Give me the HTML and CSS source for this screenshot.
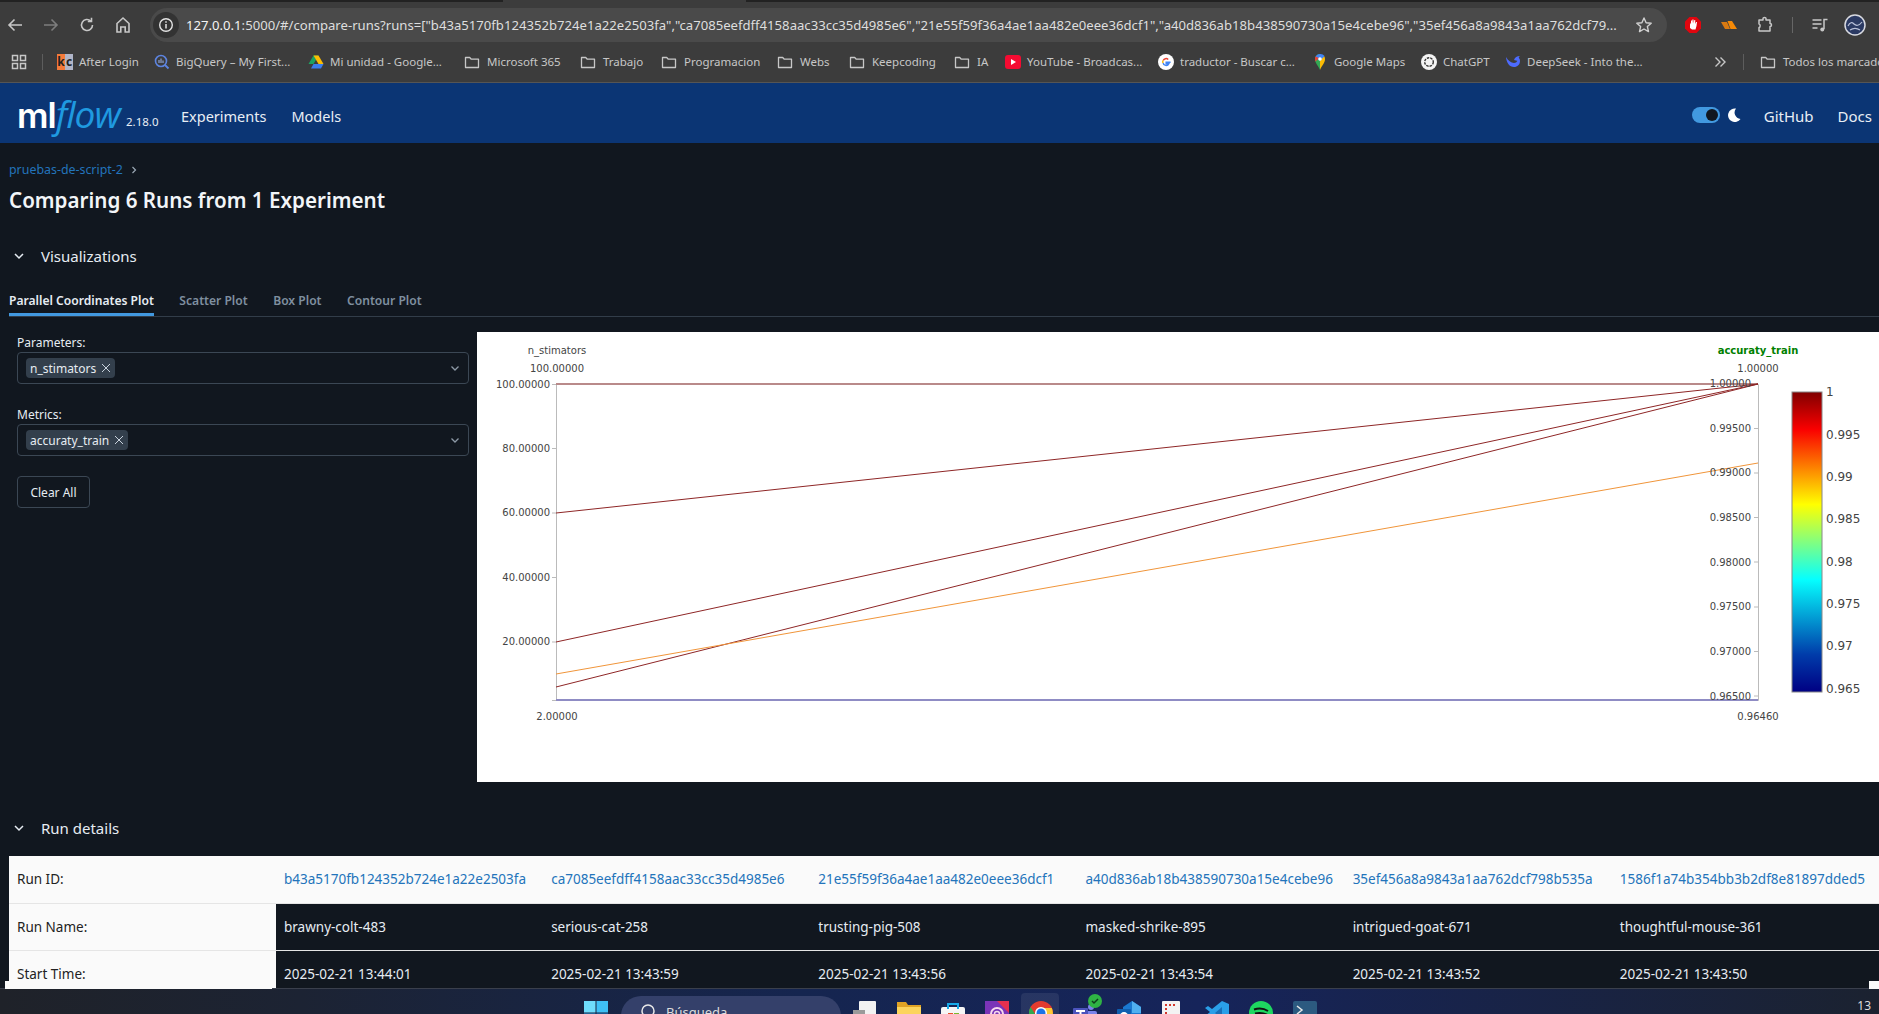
FILE: index.html
```html
<!DOCTYPE html>
<html lang="en">
<head>
    <meta charset="UTF-8">
    <title>MLflow - Comparing 6 Runs</title>
    <link rel="stylesheet" href="styles.css">
</head>
<body>
    <svg class="defs" width="0" height="0">
        <symbol id="folder" viewBox="0 0 16 16">
            <path d="M1.5 3.5h4.2l1.6 1.7h7.2v8.3h-13z" fill="none" stroke="#c7c7c7" stroke-width="1.3" stroke-linejoin="round"/>
        </symbol>
    </svg>

    <div class="tabstrip"><span class="tabstrip-active"></span></div>

    <div class="toolbar">
        <div class="nav-icons">
            <svg width="20" height="20" viewBox="0 0 20 20"><path d="M17 10H4M9.5 4.5 4 10l5.5 5.5" fill="none" stroke="#c7c7c7" stroke-width="1.6"/></svg>
            <svg width="20" height="20" viewBox="0 0 20 20"><path d="M3 10h13M10.5 4.5 16 10l-5.5 5.5" fill="none" stroke="#7d7d7d" stroke-width="1.6"/></svg>
            <svg width="20" height="20" viewBox="0 0 20 20"><path d="M15.5 10a5.5 5.5 0 1 1-1.7-4M14.5 2.8v3.7h-3.7" fill="none" stroke="#c7c7c7" stroke-width="1.6"/></svg>
            <svg width="20" height="20" viewBox="0 0 20 20"><path d="M4 17V8.5L10 3l6 5.5V17h-3.8v-5H7.8v5z" fill="none" stroke="#c7c7c7" stroke-width="1.6"/></svg>
        </div>
        <div class="url-bar">
            <span class="url-info">
                <svg width="16" height="16" viewBox="0 0 16 16"><circle cx="8" cy="8" r="6.3" fill="none" stroke="#e3e3e3" stroke-width="1.4"/><path d="M8 7v4.5M8 4.3v1.5" stroke="#e3e3e3" stroke-width="1.5"/></svg>
            </span>
            <span class="url-text"><span class="url-host">127.0.0.1</span>:5000/#/compare-runs?runs=["b43a5170fb124352b724e1a22e2503fa","ca7085eefdff4158aac33cc35d4985e6","21e55f59f36a4ae1aa482e0eee36dcf1","a40d836ab18b438590730a15e4cebe96","35ef456a8a9843a1aa762dcf79...</span>
            <svg class="url-star" width="18" height="18" viewBox="0 0 18 18"><path d="m9 2 2.1 4.7 5.1.5-3.8 3.4 1.1 5L9 13l-4.500 2.600 1.100-5L1.800 7.200l5.100-.5z" fill="none" stroke="#d0d0d0" stroke-width="1.4" stroke-linejoin="round"/></svg>
        </div>
        <div class="ext-icons">
            <svg width="18" height="18" viewBox="0 0 18 18"><path d="M5.5 1h7L17 5.5v7L12.5 17h-7L1 12.5v-7z" fill="#e0060f"/><path d="M6 12V6.5l1 2V4.500h1v3l.4-4h1.100l.2 4 .6-3.500h1l-.2 4 .9-2h1L12.500 10l-1 3.500H8z" fill="#fff"/></svg>
            <svg width="18" height="14" viewBox="0 0 18 14"><path d="M1 4h6l3 7H5z" fill="#d97a12"/><path d="M7.5 3H12l5 8h-6.5z" fill="#f58a07"/></svg>
            <svg width="18" height="18" viewBox="0 0 18 18"><path d="M3 4h4V2.500c0-1.500 3-1.500 3 0V4h4v3.500c2 0 2 3 0 3V15H3v-3.500c1.500 0 1.500-3.500 0-3.500z" fill="none" stroke="#c7c7c7" stroke-width="1.5" stroke-linejoin="round"/></svg>
            <span class="ext-sep"></span>
            <svg class="ext-music" width="18" height="18" viewBox="0 0 18 18"><path d="M1.5 4h9M1.5 8h9M1.5 12h5" stroke="#c7c7c7" stroke-width="1.5"/><path d="M13 13V3.5h3.5" fill="none" stroke="#c7c7c7" stroke-width="1.5"/><circle cx="11.3" cy="13.5" r="2" fill="#c7c7c7"/></svg>
            <svg class="ext-avatar" width="22" height="22" viewBox="0 0 22 22"><circle cx="11" cy="11" r="10" fill="#2b3a63" stroke="#d7d9e0" stroke-width="1.5"/><path d="M4 12c2-4 4-4 6-2s5 2 8-2M6 16c3-2 7-2 10 0" fill="none" stroke="#b8c0d8" stroke-width="1.2"/></svg>
        </div>
    </div>

    <div class="bookmarks">
        <svg class="bm-apps" width="16" height="16" viewBox="0 0 16 16"><path d="M1.5 1.5h5v5h-5zM9.5 1.5h5v5h-5zM1.5 9.5h5v5h-5zM9.5 9.5h5v5h-5z" fill="none" stroke="#c7c7c7" stroke-width="1.5"/></svg>
        <span class="bm-sep"></span>
        <div class="bm-grid">
            <span class="bm"><span class="kc-icon"><b>k</b><b>c</b></span>After Login</span>
            <span class="bm"><svg width="16" height="16" viewBox="0 0 16 16"><circle cx="7" cy="7" r="5.5" fill="none" stroke="#5d84e0" stroke-width="1.6"/><path d="m11 11 3.5 3.5" stroke="#5d84e0" stroke-width="1.8"/><path d="M5 6v3M7 4.5V9M9 6.5V9" stroke="#9db5ee" stroke-width="1"/></svg>BigQuery – My First...</span>
            <span class="bm"><svg width="16" height="16" viewBox="0 0 16 16"><path d="M5.5 1.5h5L5.5 10H.5z" fill="#1ca261"/><path d="M5.5 1.5h5l5 8.5h-5z" fill="#fbbc04"/><path d="M3 14.5 5.5 10h10L13 14.5z" fill="#3b7ded"/></svg>Mi unidad - Google...</span>
            <span class="bm bm-folder"><svg width="16" height="16"><use href="#folder"/></svg>Microsoft 365</span>
            <span class="bm bm-folder"><svg width="16" height="16"><use href="#folder"/></svg>Trabajo</span>
            <span class="bm bm-folder"><svg width="16" height="16"><use href="#folder"/></svg>Programacion</span>
            <span class="bm bm-folder"><svg width="16" height="16"><use href="#folder"/></svg>Webs</span>
            <span class="bm bm-folder"><svg width="16" height="16"><use href="#folder"/></svg>Keepcoding</span>
            <span class="bm bm-folder"><svg width="16" height="16"><use href="#folder"/></svg>IA</span>
            <span class="bm"><svg width="16" height="16" viewBox="0 0 16 16"><rect y="1" width="16" height="14" rx="3" fill="#f50b32"/><path d="m6 5 5 3-5 3z" fill="#fff"/></svg>YouTube - Broadcas...</span>
            <span class="bm"><svg width="16" height="16" viewBox="0 0 16 16"><circle cx="8" cy="8" r="8" fill="#fff"/><path d="M12.6 8.2H8.2v1.5h2.600a3 3 0 0 1-5.700-1" fill="none" stroke="#4285f4" stroke-width="1.5"/><path d="M5.2 6.5A3.100 3.100 0 0 1 10.200 5.500" fill="none" stroke="#ea4335" stroke-width="1.5"/><path d="M5 6.5a3 3 0 0 0 0 2.500" fill="none" stroke="#fbbc05" stroke-width="1.5"/></svg>traductor - Buscar c...</span>
            <span class="bm"><svg width="16" height="18" viewBox="0 0 16 18"><path d="M8 17C6 12 3 10 3 6a5 5 0 0 1 5-5z" fill="#34a853"/><path d="M8 17c2-5 5-7 5-11 0-1-.3-2-.8-2.700L8 6z" fill="#fbbc04"/><path d="M3.5 4 8 8l4.500-5A5 5 0 0 0 8 1a5 5 0 0 0-4.500 3" fill="#4285f4"/><path d="M3.5 3.5A5 5 0 0 0 3 6c0 1 .2 1.700.5 2.500L7 5z" fill="#ea4335"/><circle cx="8" cy="6" r="1.8" fill="#fff"/></svg>Google Maps</span>
            <span class="bm"><svg width="16" height="16" viewBox="0 0 16 16"><circle cx="8" cy="8" r="8" fill="#f4f4f4"/><circle cx="8" cy="8" r="4.3" fill="none" stroke="#333" stroke-width="1.4" stroke-dasharray="2.5 1"/></svg>ChatGPT</span>
            <span class="bm"><svg width="16" height="16" viewBox="0 0 16 16"><path d="M1 3c.5 6 3.500 10 8 10 3.500 0 6-2.500 6-6 0-2-1-3.500-2.500-4 .8 2.500-.2 6-3.500 6C6 9 3 6.500 1 3z" fill="#4d6bfe"/><path d="M9 6c.8-2.500 3-4 6-4-1.200 1-2 2.500-2 5z" fill="#4d6bfe"/></svg>DeepSeek - Into the...</span>
        </div>
        <svg class="bm-more" width="14" height="14" viewBox="0 0 14 14"><path d="m2.5 2.5 4.5 4.5-4.5 4.5M7.5 2.5 12 7l-4.5 4.5" fill="none" stroke="#c7c7c7" stroke-width="1.4"/></svg>
        <span class="bm-sep bm-sep-end"></span>
        <span class="bm bm-folder"><svg width="16" height="16"><use href="#folder"/></svg>Todos los marcados</span>
    </div>

    <header class="app-header">
        <div class="logo"><span class="logo-ml">ml</span><span class="logo-flow">flow</span></div>
        <span class="version">2.18.0</span>
        <nav class="app-nav">
            <a>Experiments</a>
            <a>Models</a>
        </nav>
        <div class="app-right">
            <span class="theme-toggle"><span class="theme-knob"></span></span>
            <svg class="moon" width="14" height="14" viewBox="0 0 14 14"><path d="M9 .5A6.800 6.800 0 1 0 13.500 11 6.500 6.500 0 0 1 9 .5z" fill="#fff"/></svg>
            <a>GitHub</a>
            <a>Docs</a>
        </div>
    </header>

    <main class="main">
        <div class="breadcrumb"><a>pruebas-de-script-2</a><svg width="10" height="10" viewBox="0 0 10 10"><path d="m3.5 2 3 3-3 3" fill="none" stroke="#9aa7b4" stroke-width="1.2"/></svg></div>
        <h1 class="page-title">Comparing 6 Runs from 1 Experiment</h1>

        <div class="section-head section-head-vis">
            <svg width="12" height="12" viewBox="0 0 12 12"><path d="m2 4 4 4 4-4" fill="none" stroke="#e6ecf2" stroke-width="1.5"/></svg>
            <span>Visualizations</span>
        </div>

        <div class="tabs">
            <span class="tab tab-active">Parallel Coordinates Plot</span>
            <span class="tab">Scatter Plot</span>
            <span class="tab">Box Plot</span>
            <span class="tab">Contour Plot</span>
        </div>

        <div class="plot-row">
            <div class="controls">
                <label class="field-label">Parameters:</label>
                <div class="select">
                    <span class="tag">n_stimators<svg width="10" height="10" viewBox="0 0 10 10"><path d="m1 1 8 8M9 1 1 9" stroke="#c9d2dc" stroke-width="1"/></svg></span>
                    <svg class="select-arrow" width="10" height="10" viewBox="0 0 10 10"><path d="m1.5 3.5 3.5 3.5 3.5-3.5" fill="none" stroke="#8d99a6" stroke-width="1.3"/></svg>
                </div>
                <label class="field-label field-label-next">Metrics:</label>
                <div class="select">
                    <span class="tag">accuraty_train<svg width="10" height="10" viewBox="0 0 10 10"><path d="m1 1 8 8M9 1 1 9" stroke="#c9d2dc" stroke-width="1"/></svg></span>
                    <svg class="select-arrow" width="10" height="10" viewBox="0 0 10 10"><path d="m1.5 3.5 3.5 3.5 3.5-3.5" fill="none" stroke="#8d99a6" stroke-width="1.3"/></svg>
                </div>
                <button class="clear-btn">Clear All</button>
            </div>

            <div class="plot">
                <svg width="1402" height="450" viewBox="477 332 1402 450">
                    <defs>
                        <linearGradient id="jet" x1="0" y1="1" x2="0" y2="0">
                            <stop offset="0" stop-color="rgb(0,0,131)"/>
                            <stop offset="0.125" stop-color="rgb(0,60,170)"/>
                            <stop offset="0.375" stop-color="rgb(5,255,255)"/>
                            <stop offset="0.625" stop-color="rgb(255,255,0)"/>
                            <stop offset="0.875" stop-color="rgb(250,0,0)"/>
                            <stop offset="1" stop-color="rgb(128,0,0)"/>
                        </linearGradient>
                    </defs>

                    <!-- axes -->
                    <path class="axis" d="M552 384.5H556.5V700.5H552M552 448.5H556M552 513H556M552 577.5H556M552 642H556"/>
                    <path class="axis" d="M1754 384.5H1758.5V700.5H1754M1754 428.5H1758M1754 473H1758M1754 517.5H1758M1754 562H1758M1754 607H1758M1754 651.5H1758M1754 696H1758"/>

                    <!-- run lines -->
                    <line x1="556" y1="384" x2="1758" y2="384" class="run run-top"/>
                    <line x1="556" y1="700" x2="1758" y2="700" class="run run-low"/>
                    <line x1="556" y1="513" x2="1758" y2="384" class="run run-red"/>
                    <line x1="556" y1="642" x2="1758" y2="384" class="run run-red"/>
                    <line x1="556" y1="687" x2="1758" y2="384" class="run run-red"/>
                    <line x1="556" y1="674" x2="1758" y2="463" class="run run-orange"/>

                    <!-- left axis labels -->
                    <text x="557" y="354" class="lbl lbl-mid">n_stimators</text>
                    <text x="557" y="372" class="lbl lbl-mid">100.00000</text>
                    <text x="550" y="388" class="lbl lbl-end">100.00000</text>
                    <text x="550" y="452" class="lbl lbl-end">80.00000</text>
                    <text x="550" y="516" class="lbl lbl-end">60.00000</text>
                    <text x="550" y="581" class="lbl lbl-end">40.00000</text>
                    <text x="550" y="645" class="lbl lbl-end">20.00000</text>
                    <text x="557" y="720" class="lbl lbl-mid">2.00000</text>

                    <!-- right axis labels -->
                    <text x="1758" y="354" class="lbl lbl-mid lbl-metric">accuraty_train</text>
                    <text x="1758" y="372" class="lbl lbl-mid">1.00000</text>
                    <text x="1751" y="387" class="lbl lbl-end">1.00000</text>
                    <text x="1751" y="432" class="lbl lbl-end">0.99500</text>
                    <text x="1751" y="476" class="lbl lbl-end">0.99000</text>
                    <text x="1751" y="521" class="lbl lbl-end">0.98500</text>
                    <text x="1751" y="566" class="lbl lbl-end">0.98000</text>
                    <text x="1751" y="610" class="lbl lbl-end">0.97500</text>
                    <text x="1751" y="655" class="lbl lbl-end">0.97000</text>
                    <text x="1751" y="700" class="lbl lbl-end">0.96500</text>
                    <text x="1758" y="720" class="lbl lbl-mid">0.96460</text>

                    <!-- colour bar -->
                    <rect x="1792" y="392" width="30" height="300" fill="url(#jet)" stroke="#888" stroke-width="1"/>
                    <text x="1826" y="396" class="bar-lbl">1</text>
                    <text x="1826" y="439" class="bar-lbl">0.995</text>
                    <text x="1826" y="481" class="bar-lbl">0.99</text>
                    <text x="1826" y="523" class="bar-lbl">0.985</text>
                    <text x="1826" y="566" class="bar-lbl">0.98</text>
                    <text x="1826" y="608" class="bar-lbl">0.975</text>
                    <text x="1826" y="650" class="bar-lbl">0.97</text>
                    <text x="1826" y="693" class="bar-lbl">0.965</text>
                </svg>
            </div>
        </div>

        <div class="section-head section-head-details">
            <svg width="12" height="12" viewBox="0 0 12 12"><path d="m2 4 4 4 4-4" fill="none" stroke="#e6ecf2" stroke-width="1.5"/></svg>
            <span>Run details</span>
        </div>

        <table class="runs">
            <tr class="row-ids">
                <th>Run ID:</th>
                <td><a>b43a5170fb124352b724e1a22e2503fa</a></td>
                <td><a>ca7085eefdff4158aac33cc35d4985e6</a></td>
                <td><a>21e55f59f36a4ae1aa482e0eee36dcf1</a></td>
                <td><a>a40d836ab18b438590730a15e4cebe96</a></td>
                <td><a>35ef456a8a9843a1aa762dcf798b535a</a></td>
                <td><a>1586f1a74b354bb3b2df8e81897dded5</a></td>
            </tr>
            <tr>
                <th>Run Name:</th>
                <td>brawny-colt-483</td>
                <td>serious-cat-258</td>
                <td>trusting-pig-508</td>
                <td>masked-shrike-895</td>
                <td>intrigued-goat-671</td>
                <td>thoughtful-mouse-361</td>
            </tr>
            <tr>
                <th>Start Time:</th>
                <td>2025-02-21 13:44:01</td>
                <td>2025-02-21 13:43:59</td>
                <td>2025-02-21 13:43:56</td>
                <td>2025-02-21 13:43:54</td>
                <td>2025-02-21 13:43:52</td>
                <td>2025-02-21 13:43:50</td>
            </tr>
        </table>
    </main>

    <footer class="taskbar">
        <svg class="win-logo" width="24" height="24" viewBox="0 0 24 24"><path d="M0 0h11.5v11.5H0z" fill="#6fdcfb"/><path d="M12.5 0H24v11.5H12.5z" fill="#3fc0f5"/><path d="M0 12.5h11.5V24H0z" fill="#2aa8ee"/><path d="M12.5 12.5H24V24H12.5z" fill="#1c8fe0"/></svg>
        <div class="task-search">
            <svg width="16" height="18" viewBox="0 0 16 18"><circle cx="8" cy="9" r="6" fill="none" stroke="#e8e8e8" stroke-width="1.5"/></svg>
            <span>Búsqueda</span>
        </div>
        <div class="task-apps">
            <svg width="24" height="24" viewBox="0 0 24 24"><rect x="6" y="0" width="17" height="24" rx="1" fill="#f2f2f2"/><rect y="9" width="12" height="15" fill="#9a9a9a"/></svg>
            <svg width="24" height="24" viewBox="0 0 24 24"><path d="M0 1h9l2 3h13v20H0z" fill="#e0a325"/><path d="M0 6h24v18H0z" fill="#fcd45c"/></svg>
            <svg width="24" height="24" viewBox="0 0 24 24"><rect y="6" width="24" height="18" rx="2" fill="#f5f5f5"/><path d="M7 8V3h10v5" fill="none" stroke="#17a9e8" stroke-width="2"/><rect x="7" y="12" width="5" height="5" fill="#e9512b"/><rect x="13" y="12" width="5" height="5" fill="#7cb82e"/><rect x="7" y="18" width="5" height="5" fill="#1ba1e2"/><rect x="13" y="18" width="5" height="5" fill="#fdb913"/></svg>
            <svg width="24" height="24" viewBox="0 0 24 24"><rect width="24" height="24" fill="#7a34b8"/><path d="M12 0h12v12z" fill="#e5304f"/><circle cx="12" cy="13" r="6" fill="none" stroke="#f6d9ee" stroke-width="2"/><circle cx="12" cy="13" r="2.5" fill="none" stroke="#f6d9ee" stroke-width="1.5"/></svg>
            <span class="task-active"><svg width="24" height="24" viewBox="0 0 24 24"><circle cx="12" cy="12" r="12" fill="#e33b2e"/><path d="M12 24a12 12 0 0 1-10.400-18L8 16z" fill="#2fa84f"/><path d="M12 24a12 12 0 0 0 10.800-17H12l4 8z" fill="#fcc934"/><circle cx="12" cy="12" r="6" fill="#fff"/><circle cx="12" cy="12" r="4.5" fill="#1a73e8"/></svg></span>
            <span class="teams"><svg width="24" height="24" viewBox="0 0 24 24"><circle cx="18" cy="6" r="3" fill="#7b83eb"/><rect x="13" y="10" width="11" height="14" rx="2" fill="#7b83eb"/><rect x="0" y="7" width="15" height="15" rx="1" fill="#4b53bc"/><path d="M3 10h9M7.5 10v9" stroke="#fff" stroke-width="2"/></svg><span class="teams-badge"><svg width="10" height="10" viewBox="0 0 10 10"><path d="m2 5 2 2 4-4" fill="none" stroke="#0f3d1c" stroke-width="1.5"/></svg></span></span>
            <svg width="24" height="24" viewBox="0 0 24 24"><path d="M6 6l9-6 9 6v16H6z" fill="#1a78d0"/><path d="M15 0l9 6v6H15z" fill="#50b0f0"/><rect y="8" width="14" height="15" rx="1" fill="#0f5fb0"/><circle cx="7" cy="15.5" r="3.5" fill="none" stroke="#fff" stroke-width="1.8"/></svg>
            <svg width="24" height="24" viewBox="0 0 24 24"><rect x="1" y="0" width="18" height="24" rx="1" fill="#f3f3f3"/><path d="M4 3h2v2H4zM8 3h2v2H8zM12 3h2v2h-2zM4 7h2v2H4zM4 11h2v2H4z" fill="#d3382c"/><path d="M17 20l6-2v4z" fill="#6fb2d6"/></svg>
            <svg width="24" height="24" viewBox="0 0 24 24"><path d="M17 0l7 3v18l-7 3L7 14l-4 3-3-2 5-4-5-4 3-2 4 3z" fill="#2a9fe8"/><path d="M17 6v12l-7-6z" fill="#1a6fb8"/></svg>
            <svg width="24" height="24" viewBox="0 0 24 24"><circle cx="12" cy="12" r="12" fill="#1ed760"/><path d="M5 8.500c5-1.500 10-1 14 1.500M6 12.500c4-1 8-.8 12 1.200M7 16.500c3.500-.8 6.500-.5 9.500 1" fill="none" stroke="#111" stroke-width="2"/></svg>
            <svg width="24" height="24" viewBox="0 0 24 24"><rect width="24" height="24" rx="2" fill="#2c5a80"/><path d="M4 5l5 4-5 4M10 14h6" fill="none" stroke="#e8e8e8" stroke-width="1.5"/></svg>
        </div>
        <span class="task-clock">13</span>
    </footer>
</body>
</html>
```

FILE: styles.css
```css
html, body {
    margin: 0;
    padding: 0;
    height: 100%;
}
body {
    display: flex;
    flex-direction: column;
    height: 100vh;
    overflow: hidden;
    background-color: #11171f;
    color: #e6ecf2;
    font-family: "Noto Sans", Arial, sans-serif;
    font-size: 13px;
}
svg {
    display: block;
    flex: none;
}
.defs {
    position: absolute;
}

/* browser chrome */
.tabstrip {
    height: 2px;
    background-color: #222;
    flex: none;
    padding-left: 503px;
}
.tabstrip-active {
    display: block;
    width: 243px;
    height: 2px;
    background-color: #3c3c3c;
}
.toolbar {
    display: flex;
    align-items: center;
    height: 34px;
    padding-top: 6px;
    padding-left: 5px;
    background-color: #3c3c3c;
    flex: none;
    padding-bottom: 2px;
}
.nav-icons {
    display: flex;
    gap: 16px;
}
.url-bar {
    display: flex;
    align-items: center;
    width: 1517px;
    height: 34px;
    margin-left: 17px;
    border-radius: 17px;
    background-color: #4a4a4a;
    flex: none;
}
.url-info {
    display: flex;
    align-items: center;
    justify-content: center;
    width: 26px;
    height: 26px;
    margin-left: 3px;
    border-radius: 50%;
    background-color: #333;
    flex: none;
}
.url-text {
    width: 1432px;
    margin-left: 7px;
    font-size: 13.13px;
    white-space: nowrap;
    overflow: hidden;
    color: #dedede;
    flex: none;
}
.url-host {
    color: #f4f4f4;
}
.url-star {
    margin-left: 17px;
}
.ext-icons {
    display: flex;
    align-items: center;
    margin-left: 17px;
    gap: 18px;
}
.ext-sep {
    width: 1px;
    height: 16px;
    background-color: #666;
}
.ext-avatar {
    margin-left: -3px;
}
.bookmarks {
    display: flex;
    align-items: center;
    height: 35px;
    padding-bottom: 3px;
    padding-left: 11px;
    background-color: #3c3c3c;
    border-bottom: 1px solid #555;
    flex: none;
    white-space: nowrap;
    overflow: hidden;
    color: #c7c7c7;
    font-size: 11.5px;
}
.bm-sep {
    width: 1px;
    height: 16px;
    margin: 0 14px 0 15px;
    background-color: #5d5d5d;
    flex: none;
}
.bm-grid {
    display: grid;
    grid-template-columns: 97px 154px 156px 116px 81px 116px 72px 105px 51px 153px 154px 109px 84px 207px;
    flex: none;
}
.bm {
    display: flex;
    align-items: center;
    gap: 6px;
    overflow: hidden;
}
.bm-folder {
    gap: 7px;
}
.kc-icon {
    display: flex;
    width: 16px;
    height: 16px;
    flex: none;
    line-height: 16px;
    font-size: 12px;
    text-align: center;
    color: #222;
}
.kc-icon b {
    width: 8px;
    background-color: #f47a3a;
}
.kc-icon b + b {
    background-color: #b0b5c8;
}
.bm-more {
    margin-left: 1px;
}
.bm-sep-end {
    margin: 0 16px 0 16px;
}

/* mlflow header */
.app-header {
    display: flex;
    align-items: center;
    height: 60px;
    padding-left: 17px;
    background-color: #0b3574;
    color: #e8eef5;
    font-size: 14.5px;
    flex: none;
}
.logo {
    display: flex;
    align-items: baseline;
    width: 109px;
    line-height: 40px;
    margin-top: 3px;
    white-space: nowrap;
}
.logo-ml {
    font-family: Inter, sans-serif;
    font-weight: 600;
    font-size: 35px;
    letter-spacing: -1px;
    color: #fff;
}
.logo-flow {
    font-family: "Open Sans", sans-serif;
    font-style: italic;
    font-size: 37px;
    color: #1f9ae0;
    letter-spacing: -1px;
}
.version {
    align-self: flex-end;
    margin-bottom: 14px;
    font-size: 11.5px;
    width: 55px;
}
.app-nav {
    display: flex;
    gap: 25px;
    margin-top: 6px;
}
.app-right {
    display: flex;
    align-items: center;
    margin-left: auto;
    padding-right: 7px;
    font-size: 15px;
}
.app-right a {
    margin-top: 6px;
}
.theme-toggle {
    display: flex;
    justify-content: flex-end;
    align-items: center;
    width: 28px;
    height: 16px;
    margin-top: 3px;
    border-radius: 8px;
    background-color: #4299e0;
}
.theme-knob {
    width: 12px;
    height: 12px;
    margin-right: 2px;
    border-radius: 50%;
    background-color: #11171f;
}
.moon {
    margin-top: 3px;
    margin-left: 7px;
    margin-right: 23px;
}
.app-right a + a {
    margin-left: 24px;
}

/* page content */
.main {
    flex: 1;
    min-height: 0;
    overflow: hidden;
    padding: 17px 0 0 9px;
}
.breadcrumb {
    display: flex;
    align-items: center;
    gap: 6px;
    line-height: 20px;
    font-size: 12.4px;
    color: #2374bb;
}
.page-title {
    margin: 5px 0 0;
    line-height: 30px;
    font-size: 20.6px;
    font-weight: 600;
    color: #f2f5f8;
}
.section-head {
    display: flex;
    align-items: center;
    gap: 16px;
    line-height: 24px;
    padding-left: 4px;
    font-size: 15px;
}
.section-head-vis {
    margin-top: 29px;
}
.section-head-details {
    margin-top: 34px;
}
.tabs {
    display: flex;
    gap: 25.5px;
    margin-top: 16px;
    padding-top: 7px;
    height: 25px;
    border-bottom: 1px solid #323d49;
    font-size: 12.1px;
    line-height: 20px;
    color: #7f8f9f;
}
.tab {
    font-weight: 600;
    height: 25px;
    box-sizing: border-box;
}
.tab-active {
    color: #e6ecf2;
    border-bottom: 3px solid #4299e0;
}
.plot-row {
    display: flex;
    margin-top: 15px;
}
.controls {
    width: 452px;
    padding: 2px 8px 0;
    flex: none;
}
.field-label {
    display: block;
    line-height: 18px;
    font-size: 12px;
}
.field-label-next {
    margin-top: 22px;
}
.select {
    display: flex;
    align-items: center;
    justify-content: space-between;
    box-sizing: border-box;
    height: 32px;
    padding: 0 8px;
    border: 1px solid #3b4754;
    border-radius: 4px;
}
.tag {
    display: flex;
    align-items: center;
    gap: 5px;
    height: 20px;
    padding: 0 4px;
    border-radius: 4px;
    background-color: #333f4c;
    font-size: 12px;
}
.select-arrow {
    margin-right: 0;
}
.clear-btn {
    display: block;
    box-sizing: border-box;
    width: 73px;
    height: 32px;
    margin-top: 20px;
    border: 1px solid #3b4754;
    border-radius: 4px;
    background: none;
    color: #e6ecf2;
    font-family: inherit;
    font-size: 12px;
}
.plot {
    width: 1402px;
    height: 450px;
    background-color: #fff;
    flex: none;
}
.axis {
    fill: none;
    stroke: #bbb;
    stroke-width: 1;
}
.run {
    fill: none;
    stroke-width: 1;
}
.run-top {
    stroke: #b98a8a;
    stroke-width: 2;
}
.run-low {
    stroke: #8f8cc4;
    stroke-width: 2;
}
.run-red {
    stroke: #8e2626;
}
.run-orange {
    stroke: #f0953a;
}
.lbl {
    font-family: "DejaVu Sans", sans-serif;
    font-size: 10px;
    fill: #444;
}
.lbl-mid {
    text-anchor: middle;
}
.lbl-end {
    text-anchor: end;
}
.lbl-metric {
    fill: #008000;
    font-weight: bold;
}
.bar-lbl {
    font-family: "DejaVu Sans", sans-serif;
    font-size: 12px;
    fill: #444;
}

/* run table */
.runs {
    width: 1870px;
    margin-top: 16px;
    border-collapse: collapse;
    table-layout: fixed;
    font-size: 13.5px;
}
.runs th,
.runs td {
    height: 47px;
    padding: 0 8px;
    box-sizing: border-box;
    border-bottom: 1px solid #e5e5e5;
    text-align: left;
    white-space: nowrap;
    overflow: hidden;
}
.runs th {
    width: 267px;
    background-color: #fafafa;
    color: #222;
    font-weight: 400;
}
.row-ids td {
    background-color: #fafafa;
    color: #2374bb;
}

/* windows taskbar */
.taskbar {
    position: relative;
    display: flex;
    height: 25px;
    flex: none;
    border-top: 1px solid #3a3f4c;
    background: linear-gradient(90deg, #1f2229 0, #1c2333 300px, #15254f 800px, #16245a 1200px, #1b2230 1879px);
    color: #ddd;
}
.taskbar::before,
.taskbar::after {
    content: "";
    position: absolute;
    bottom: 100%;
    height: 8px;
    background-color: #fafafa;
}
.taskbar::before {
    left: 5px;
    width: 267px;
}
.taskbar::after {
    right: 0;
    width: 10px;
}
.win-logo {
    margin: 12px 0 0 584px;
}
.task-search {
    display: flex;
    gap: 10px;
    box-sizing: border-box;
    width: 220px;
    height: 40px;
    margin: 7px 0 0 13px;
    padding: 6px 0 0 19px;
    border-radius: 20px;
    background-color: #34406a;
    font-size: 13px;
    line-height: 20px;
}
.task-apps {
    display: flex;
    gap: 20px;
    margin: 12px 0 0 12px;
}
.task-active {
    position: relative;
}
.task-active::before {
    content: "";
    position: absolute;
    top: -8px;
    left: -8px;
    width: 38px;
    height: 40px;
    border-radius: 4px;
    background-color: rgba(255, 255, 255, 0.08);
}
.task-active svg {
    position: relative;
}
.teams {
    position: relative;
}
.teams-badge {
    position: absolute;
    top: -7px;
    right: -5px;
    display: flex;
    align-items: center;
    justify-content: center;
    width: 14px;
    height: 14px;
    border-radius: 50%;
    background-color: #2fb344;
}
.task-clock {
    margin: 8px 0 0 auto;
    padding-right: 8px;
    font-size: 12px;
}
```
